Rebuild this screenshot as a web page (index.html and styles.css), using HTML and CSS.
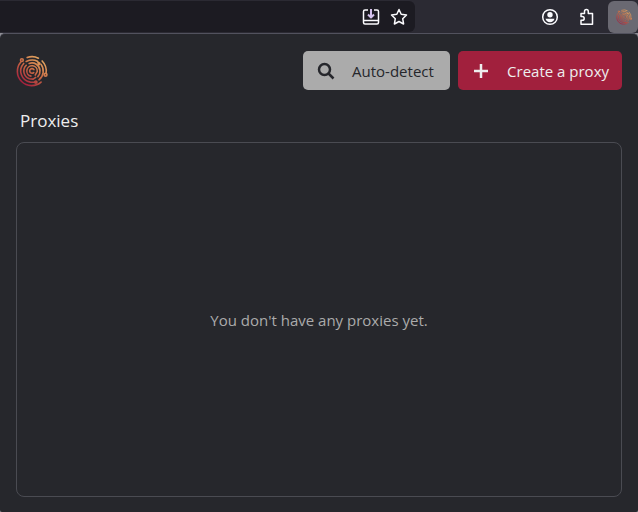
FILE: index.html
```
<!DOCTYPE html>
<html lang="en">
<head>
  <meta charset="UTF-8" />
  <meta name="viewport" content="width=device-width, initial-scale=1.0" />
  <title>Proxies</title>
  <link rel="stylesheet" href="styles.css">
</head>
<body>
  <div class="toolbar">
    <div class="urlbar">
      <button class="tool" aria-label="Install">
        <svg width="18" height="18" viewBox="0 0 18 18">
          <path d="M6 2H3Q1.500 2 1.500 3.500V14.500Q1.500 16 3 16H15Q16.500 16 16.500 14.500V3.500Q16.500 2 15 2H12M1.500 12.500H16.500" />
          <path class="accent" d="M9 1V9M6 6.500L9 9.500L12 6.500" />
        </svg>
      </button>
      <button class="tool" aria-label="Bookmark">
        <svg width="18" height="18" viewBox="0 0 18 18">
          <path d="M9 1.500L11.200 6.300L16.500 7L12.700 10.700L13.600 16L9 13.500L4.400 16L5.300 10.700L1.500 7L6.800 6.300Z" />
        </svg>
      </button>
    </div>
    <div class="extensions">
      <button class="tool" aria-label="Account">
        <svg width="18" height="18" viewBox="0 0 18 18">
          <circle cx="9" cy="9" r="7.300" />
          <circle class="solid" cx="9" cy="6.800" r="2.700" />
          <path class="solid" d="M4.500 10.800H13.500Q12.500 14.200 9 14.200T4.500 10.800Z" />
        </svg>
      </button>
      <button class="tool" aria-label="Extensions">
        <svg width="18" height="18" viewBox="0 0 18 18">
          <path d="M4 16.200V12.300H5.300A1.900 1.900 0 0 0 5.300 8.500H4V5.500H7.500V3.500A1.900 1.900 0 0 1 11.300 3.500V5.500H15.500V16.200Z" />
        </svg>
      </button>
      <button class="tool current" aria-label="Proxy extension">
        <svg width="16" height="16" viewBox="0 0 30 30"><use href="#logo" /></svg>
      </button>
    </div>
  </div>

  <main class="popup">
    <header class="header">
      <svg class="logo" width="32" height="32" viewBox="0 0 30 30" role="img" aria-label="Logo">
        <defs>
          <linearGradient id="warm" gradientUnits="userSpaceOnUse" x1="6" y1="26" x2="23" y2="4">
            <stop offset="0" stop-color="#a51f3d" />
            <stop offset="0.5" stop-color="#c66543" />
            <stop offset="1" stop-color="#e3a45f" />
          </linearGradient>
          <g id="logo" fill="none" stroke="url(#warm)" stroke-width="1.500" stroke-linecap="round">
            <path d="M4.500 6.600A13.400 13.400 0 0 0 23.500 25.400" />
            <path d="M10.500 2.400A13.400 13.400 0 0 1 21 3" />
            <path d="M24.500 5.600A13.400 13.400 0 0 1 28.200 17" />
            <path d="M7.200 7.900A10.500 10.500 0 0 0 13.500 25.400L18 25.600" />
            <path d="M9.500 6L12.500 5A10.500 10.500 0 0 1 20 5.800L21.500 8" />
            <path d="M23.500 8.800A10.500 10.500 0 0 1 21.500 23.300" />
            <path d="M9.600 9.600A7.600 7.600 0 0 0 12.500 22.200L16 22.600L18.500 21" />
            <path d="M12.300 7.900A7.600 7.600 0 0 1 22.500 14.500A7.600 7.600 0 0 1 20.500 20.300" />
            <path d="M14 19.800A4.900 4.900 0 1 1 19.900 15.500L18 18.800" />
            <path d="M16.800 13.700A2.200 2.200 0 1 0 16.600 16.500" />
            <circle cx="5.500" cy="4.800" r="1.300" />
            <circle cx="27.700" cy="18.500" r="1.300" />
            <circle cx="18.600" cy="25.400" r="1" />
            <circle cx="21.600" cy="8.200" r="0.800" />
          </g>
        </defs>
        <use href="#logo" />
      </svg>
      <div class="actions">
        <button class="btn btn-detect">
          <svg width="18" height="18" viewBox="0 0 18 18">
            <circle cx="7.500" cy="7.500" r="5.500" />
            <path d="M11.500 11.500L16.500 16.500" />
          </svg>
          Auto-detect
        </button>
        <button class="btn btn-create">
          <svg width="18" height="18" viewBox="0 0 18 18">
            <path d="M9 2V16M2 9H16" />
          </svg>
          Create a proxy
        </button>
      </div>
    </header>
    <h1 class="title">Proxies</h1>
    <section class="proxies">
      <p>You don't have any proxies yet.</p>
    </section>
  </main>
</body>
</html>
```

FILE: styles.css
```
html, body {
  height: 100%;
  margin: 0;
}
* {
  box-sizing: border-box;
}
body {
  display: flex;
  flex-direction: column;
  font-family: "Segoe UI", "Open Sans", sans-serif;
  font-size: 15px;
  background: #8f8f96;
  color: #eeeeee;
}
button {
  border: none;
  font: inherit;
}
svg {
  display: block;
  flex: none;
}
.toolbar {
  display: flex;
  height: 33px;
  background: #2b2a33;
}
.urlbar {
  display: flex;
  flex: 1;
  align-items: center;
  justify-content: flex-end;
  gap: 10px;
  margin: 1px 0;
  padding-right: 7px;
  background: #1c1b22;
  border-radius: 0 6px 6px 0;
}
.extensions {
  display: flex;
  align-items: center;
  gap: 18px;
  padding-left: 126px;
}
.tool {
  padding: 0;
  background: none;
  color: #fbfbfe;
}
.tool path,
.tool circle {
  stroke-linejoin: round;
}
.tool > svg > path,
.tool > svg > circle {
  fill: none;
  stroke: currentColor;
  stroke-width: 1.5;
}
.tool > svg > .accent {
  stroke: #d5c2ee;
  stroke-width: 2;
}
.tool > svg > .solid {
  fill: currentColor;
  stroke: none;
}
.current {
  height: 32px;
  margin-left: -5px;
  padding: 0 6px 0 8px;
  border-radius: 6px;
  background: #6a6972;
}
.popup {
  display: flex;
  flex: 1;
  flex-direction: column;
  padding: 17px 16px 15px;
  background: #26272c;
  border-top: 1px solid #52525e;
  border-radius: 5px 5px 2px 2px;
}
.header {
  display: flex;
  align-items: center;
  justify-content: space-between;
}
.actions {
  display: flex;
  gap: 8px;
}
.btn {
  display: flex;
  align-items: center;
  gap: 17px;
  height: 39px;
  padding: 0 13px 0 14px;
  border-radius: 5px;
}
.btn svg {
  fill: none;
  stroke: currentColor;
  stroke-width: 2.5;
}
.btn-detect {
  min-width: 147px;
  background: #ababab;
  color: #26272c;
}
.btn-create {
  background: #a1203d;
  color: #eeeeee;
}
.title {
  margin: 18px 4px 9px;
  font-size: 17px;
  font-weight: 400;
  line-height: 25px;
}
.proxies {
  display: flex;
  flex: 1;
  align-items: center;
  justify-content: center;
  border: 1px solid #4a4b52;
  border-radius: 8px;
  color: #ababab;
}
.proxies p {
  margin: 0;
}
```
